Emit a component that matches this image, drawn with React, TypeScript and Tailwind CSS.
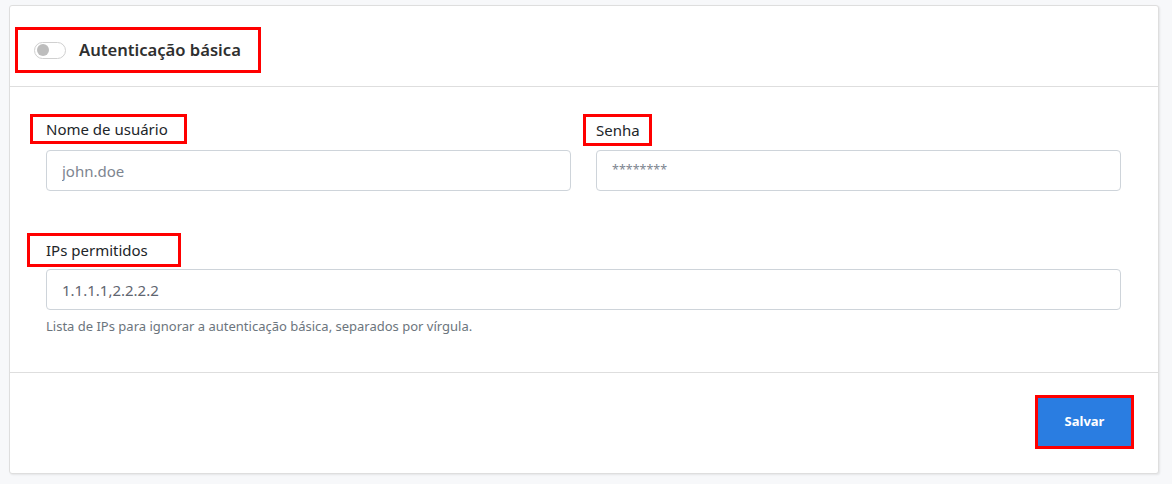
export default function App() {
  return (
    <div
      className="min-h-[484px] w-[1172px] bg-[#f7f8fa] pl-[9px] pt-[5px]"
      style={{ fontFamily: '"Noto Sans", "Open Sans", sans-serif' }}
    >
      <div className="w-[1150px] rounded-[3px] border border-[#dedede] bg-white shadow-[1px_1px_2px_rgba(0,0,0,0.08)]">
        {/* cabeçalho */}
        <div className="h-[81px] border-b border-[#dedede] pl-[5px] pt-[21px]">
          <div className="flex h-[46px] w-[246px] items-center border-[3px] border-[#ff0000] pl-[16px]">
            <div className="flex h-[17px] w-[32px] items-center rounded-full border border-[#d0d0d0] bg-white px-[2px]">
              <div className="h-[12px] w-[12px] rounded-full bg-[#bdbdbd]" />
            </div>
            <span className="ml-[13px] text-[16.6px] font-semibold text-[#2f2f2f]">Autenticação básica</span>
          </div>
        </div>

        {/* corpo */}
        <div className="h-[286px] border-b border-[#dedede] pl-[36px] pr-[37px] pt-[27px]">
          <div className="grid grid-cols-2 gap-[25px]">
            <div>
              <div className="-ml-[16px] inline-flex h-[30px] items-center border-[3px] border-[#ff0000] pl-[13px] pr-[16px] text-[15px] text-[#212529]">
                Nome de usuário
              </div>
              <input
                className="mt-[6px] block h-[41px] w-full rounded-[4px] border border-[#ced4da] px-[15px] text-[15px] text-[#495057] placeholder:text-[#7d8590] focus:outline-none"
                placeholder="john.doe"
              />
            </div>
            <div>
              <div className="-ml-[13px] inline-flex h-[32px] items-center border-[3px] border-[#ff0000] pl-[10px] pr-[9px] text-[15px] text-[#212529]">
                Senha
              </div>
              <input
                type="password"
                className="mt-[4px] block h-[41px] w-full rounded-[4px] border border-[#ced4da] px-[15px] pb-[3px] text-[12.5px] text-[#495057] placeholder:text-[#7d8590] focus:outline-none"
                placeholder="********"
              />
            </div>
          </div>

          <div className="mt-[42px]">
            <div className="-ml-[19px] inline-flex h-[34px] items-center border-[3px] border-[#ff0000] pl-[16px] pr-[30px] text-[15px] text-[#212529]">
              IPs permitidos
            </div>
            <input
              className="mt-[2px] block h-[41px] w-full rounded-[4px] border border-[#ced4da] px-[15px] text-[15px] text-[#5f6670] focus:outline-none"
              defaultValue="1.1.1.1,2.2.2.2"
            />
            <p className="mt-[7px] text-[13px] text-[#6c757d]">
              Lista de IPs para ignorar a autenticação básica, separados por vírgula.
            </p>
          </div>
        </div>

        {/* rodapé */}
        <div className="flex h-[100px] justify-end pr-[24px] pt-[22px]">
          <div className="h-[54px] border-[3px] border-[#ff0000]">
            <button className="h-full w-[93px] bg-[#2a7de1] text-[13px] font-bold text-white">Salvar</button>
          </div>
        </div>
      </div>
    </div>
  )
}
